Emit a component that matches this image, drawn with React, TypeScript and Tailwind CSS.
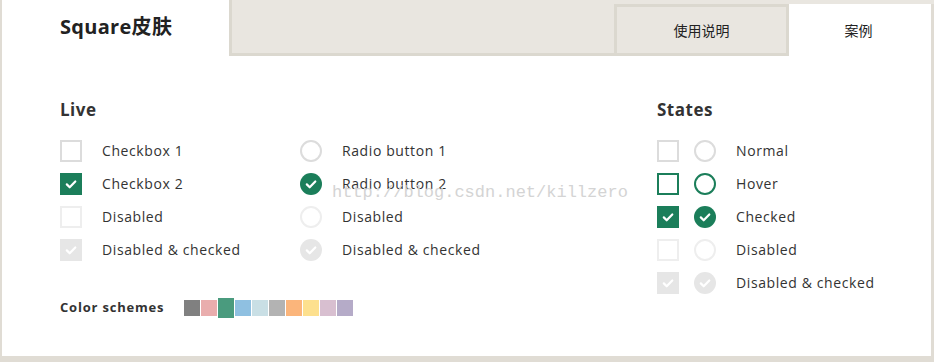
import React from "react";

type BoxState = "normal" | "hover" | "checked" | "disabled" | "disabledChecked";

const boxStyles: Record<BoxState, string> = {
  normal: "border-2 border-[#dcdcdc] bg-white",
  hover: "border-2 border-[#1b7e5a] bg-white",
  checked: "bg-[#1b7e5a]",
  disabled: "border-2 border-[#eeeeee] bg-white",
  disabledChecked: "bg-[#e6e6e6]",
};

function CheckMark() {
  return (
    <svg viewBox="0 0 22 22" className="absolute inset-0 w-[22px] h-[22px]">
      <path
        d="M6.8 11.4l2.9 2.9 5.6-5.8"
        fill="none"
        stroke="#fff"
        strokeWidth="2.2"
        strokeLinecap="round"
        strokeLinejoin="round"
      />
    </svg>
  );
}

function Control({ state, round }: { state: BoxState; round?: boolean }) {
  const checked = state === "checked" || state === "disabledChecked";
  return (
    <div
      className={`relative w-[22px] h-[22px] shrink-0 ${round ? "rounded-full" : ""} ${boxStyles[state]}`}
    >
      {checked && <CheckMark />}
    </div>
  );
}

function Row({ children, label }: { children: React.ReactNode; label: string }) {
  return (
    <div className="flex items-center h-[22px]">
      {children}
      <span className="text-[14px] leading-[20px] tracking-[0.6px] text-[#333] -mt-[1px]">{label}</span>
    </div>
  );
}

const liveRows: { state: BoxState; cb: string; rb: string }[] = [
  { state: "normal", cb: "Checkbox 1", rb: "Radio button 1" },
  { state: "checked", cb: "Checkbox 2", rb: "Radio button 2" },
  { state: "disabled", cb: "Disabled", rb: "Disabled" },
  { state: "disabledChecked", cb: "Disabled & checked", rb: "Disabled & checked" },
];

const stateRows: { state: BoxState; label: string }[] = [
  { state: "normal", label: "Normal" },
  { state: "hover", label: "Hover" },
  { state: "checked", label: "Checked" },
  { state: "disabled", label: "Disabled" },
  { state: "disabledChecked", label: "Disabled & checked" },
];

const swatches = [
  "#808080",
  "#e9adad",
  "#4a9b7e",
  "#8fc0e1",
  "#c9dfe5",
  "#b3b3b3",
  "#fbb57b",
  "#fde08e",
  "#d8bfd0",
  "#b5abc8",
];

export default function App() {
  return (
    <div
      className="w-[936px] h-[362px] bg-white overflow-hidden relative"
      style={{ fontFamily: '"Open Sans", "Noto Sans CJK SC", sans-serif' }}
    >
      <div className="w-[934px] h-[362px] flex flex-col border-l-2 border-b-[6px] border-[#e0dcd4]">
        {/* Header tabs */}
        <div className="flex h-[56px] shrink-0">
          <div className="w-[227px] bg-white pl-[58px] pt-[12px]">
            <h1 className="text-[20px] font-bold text-[#222] tracking-[0.3px]">
              Square皮肤
            </h1>
          </div>
          <div className="flex-1 flex flex-col bg-[#e9e6e0] border-l-[3px] border-[#dbd8cf]">
            <div className="h-[4px] shrink-0" />
            <div className="flex-1 flex">
              <div className="flex-1 border-b-[3px] border-[#dbd8cf]" />
              <div className="w-[175px] flex items-center justify-center border-t-[3px] border-l-[3px] border-r-[3px] border-b-[3px] border-[#dbd8cf] text-[14px] text-[#222]">
                使用说明
              </div>
              <div className="w-[145px] flex items-center justify-center bg-white border-r-[3px] border-[#e0dcd4] text-[14px] text-[#222] pr-[3px]">
                案例
              </div>
            </div>
          </div>
        </div>

        {/* Body */}
        <div className="flex-1 flex border-r-[3px] border-[#e0dcd4] pl-[58px] pt-[42px]">
          <div className="w-[597px] flex flex-col">
            <h2 className="text-[17px] font-bold text-[#333] leading-[24px] tracking-[0.5px] mb-[18px]">Live</h2>
            <div className="flex">
              <div className="w-[240px] flex flex-col gap-[11px]">
                {liveRows.map((r) => (
                  <Row key={r.cb + r.state} label={r.cb}>
                    <div className="mr-[20px]">
                      <Control state={r.state} />
                    </div>
                  </Row>
                ))}
              </div>
              <div className="flex flex-col gap-[11px]">
                {liveRows.map((r) => (
                  <Row key={r.rb + r.state} label={r.rb}>
                    <div className="mr-[20px]">
                      <Control state={r.state} round />
                    </div>
                  </Row>
                ))}
              </div>
            </div>
            <div className="flex items-center mt-[37px]">
              <span className="w-[124px] text-[13px] font-bold tracking-[0.8px] text-[#333]">Color schemes</span>
              <div className="flex items-center gap-[1px]">
                {swatches.map((c, i) => (
                  <div
                    key={c}
                    className={i === 2 ? "w-[16px] h-[20px]" : "w-[16px] h-[16px]"}
                    style={{ backgroundColor: c }}
                  />
                ))}
              </div>
            </div>
          </div>
          <div className="flex flex-col">
            <h2 className="text-[17px] font-bold text-[#333] leading-[24px] tracking-[0.5px] mb-[18px]">States</h2>
            <div className="flex flex-col gap-[11px]">
              {stateRows.map((r) => (
                <Row key={r.label + r.state} label={r.label}>
                  <div className="flex gap-[15px] mr-[20px]">
                    <Control state={r.state} />
                    <Control state={r.state} round />
                  </div>
                </Row>
              ))}
            </div>
          </div>
        </div>
      </div>

      {/* Watermark */}
      <div
        className="absolute left-[332px] top-[182px] text-[17px] leading-[22px] text-[#d4d4d4] pointer-events-none"
        style={{ fontFamily: '"Liberation Mono", monospace' }}
      >
        http://blog.csdn.net/killzero
      </div>
    </div>
  );
}
